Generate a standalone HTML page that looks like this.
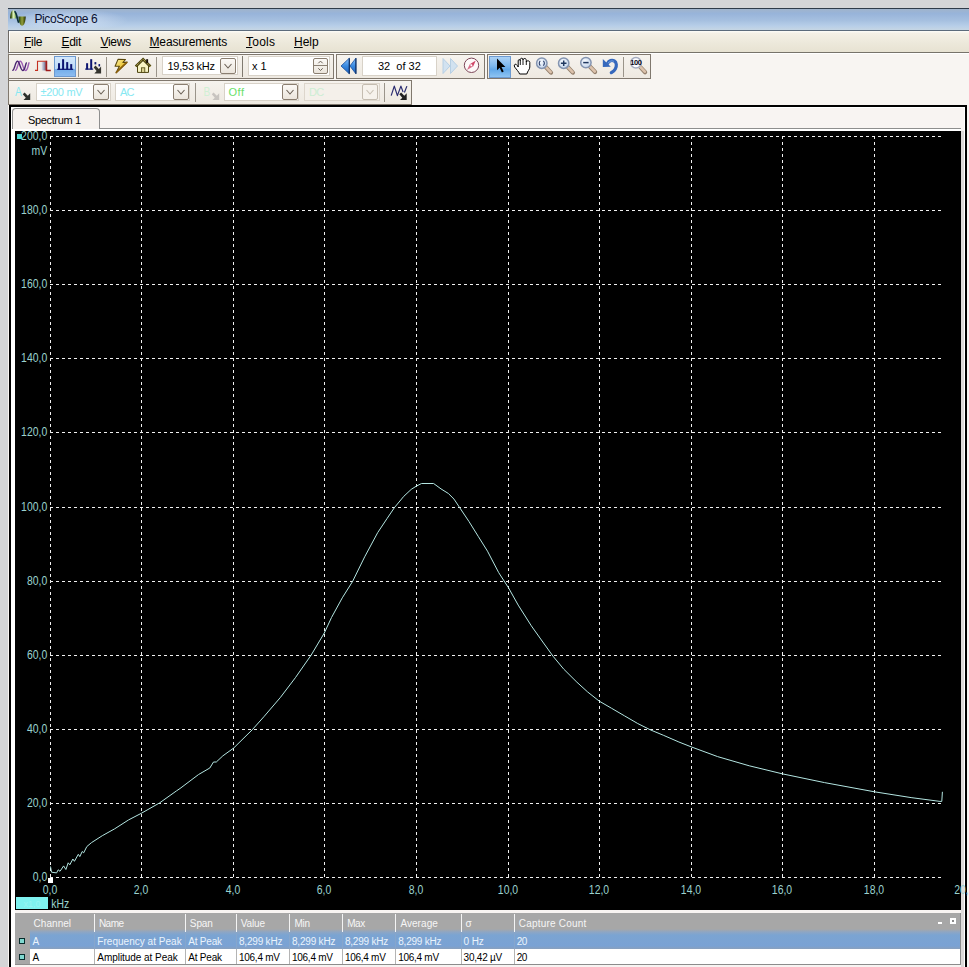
<!DOCTYPE html>
<html lang="en">
<head>
<meta charset="utf-8">
<title>PicoScope 6</title>
<style>
*{box-sizing:border-box;margin:0;padding:0}
html,body{width:969px;height:967px;overflow:hidden;background:#d4d5d7}
body{position:relative;font-family:"Liberation Sans",sans-serif;font-size:11px;color:#000}
.abs{position:absolute}
#title{left:8px;top:8px;width:961px;height:23px;border-top:1px solid #2e3b49;border-bottom:1px solid #5c6b7c;
 background:linear-gradient(#a0b4cc 0,#98b4da 22%,#a6c0e0 55%,#b7cee8 80%,#c6d6e4 100%)}
#title .glow{left:10px;top:0;width:120px;height:21px;background:radial-gradient(ellipse 58px 11px at 52px 11px,rgba(236,244,255,.6),rgba(236,244,255,0))}
#title .t{left:26.5px;top:3px;font-size:12px;line-height:14px;letter-spacing:-.42px;color:#0a1030;white-space:nowrap}
#menu{left:8px;top:31px;width:961px;height:22px;border-left:1px solid #6e6a66;border-bottom:1px solid #77736a;
 background:linear-gradient(#fdfcf8 0,#f4f0e6 12%,#ece8da 60%,#e7e2d2 100%)}
#menu:before{content:"";position:absolute;left:0;top:0;width:1px;height:21px;background:#fff}
#menu span{position:absolute;top:4px;font-size:12px;line-height:14px;letter-spacing:-.3px;white-space:nowrap}
#menu u{text-decoration:underline;text-underline-offset:1px;text-decoration-thickness:1px}
#tbarea{left:8px;top:53px;width:961px;height:52px;background:#f8f5f2;border-left:1px solid #6e6a66;border-top:1px solid #fff}
.grp{position:absolute;height:25px;background:linear-gradient(#f6f3ee,#eee9e1);border:1px solid #80786e}
.sep{position:absolute;width:1px;background:#9a948a}
.box{position:absolute;background:#fff;border:1px solid #d8d2c8;height:19px}
.box span{position:absolute;top:3px;font-size:11px;line-height:13px;white-space:nowrap;letter-spacing:-.3px}
.dd{position:absolute;width:16px;height:16px;border:1px solid #8a7e70;border-radius:2px;background:linear-gradient(#fbf9f6,#ebe5dc)}
.sel{position:absolute;border:1px solid #6d9ad0;background:linear-gradient(#d4e8fb 0,#bcd9f7 62%,#74aeea 66%,#8cbcf0 100%)}
svg{position:absolute;overflow:visible}
#frame{left:9px;top:105px;width:958px;height:870px;border:2px solid #000;background:#f8f4f2}
#frame:before{content:"";position:absolute;left:0;top:0;right:0;bottom:0;border:1px solid #fff}
#tab{left:12px;top:108px;width:88px;height:21px;border:1px solid #8e8e8e;border-bottom:none;border-radius:4px 4px 0 0;background:#f6f2ef}
#tab span{position:absolute;left:15px;top:5px;font-size:11px;line-height:13px;letter-spacing:-.36px;white-space:nowrap}
#tabline{left:11px;top:129px;width:950px;height:2px;background:#fff}
#tabline:before{content:"";position:absolute;left:88px;top:-1px;width:862px;height:1px;background:#8e8e8e}
svg.chart{left:15px;top:131px}
#tbl{left:15px;top:913px;width:946px;height:52px;background:#a7a7a7;border-right:1px solid #8c8c8c;border-bottom:1px solid #8c8c8c;overflow:hidden}
#tbl span{position:absolute;font-size:10px;line-height:12px;white-space:nowrap}
#tbl .h{top:5px;color:#f6f6f6}
#tbl .a{top:23px;color:#eaf3fc}
#tbl .b{top:38.5px;color:#000}
#tbl i{position:absolute;width:1px}
#tbl .vh{top:1px;height:18px;background:#f4f4f4}
#tbl .v1{top:19px;height:17px;background:#86a6cc}
#tbl .v2{top:36px;height:15px;background:#b4b4b4}
#tbl .r1{position:absolute;left:15px;top:16px;right:0;height:20px;background:linear-gradient(#a7a7a7 0,#8ea6c4 15%,#7ba4d2 30%,#7aa2d4 85%,#8aa0bc 100%)}
#tbl .r2{position:absolute;left:15px;top:36px;right:0;height:15px;background:#fff}
.cb{position:absolute;left:4px;width:6px;height:6px;border:1px solid #062c2c;background:#7fd8d0}
</style>
</head>
<body>
<div id="title" class="abs"><div class="glow abs"></div><div class="t abs">PicoScope 6</div></div>
<div id="menu" class="abs">
<span style="left:15px"><u>F</u>ile</span>
<span style="left:52.5px"><u>E</u>dit</span>
<span style="left:91.5px"><u>V</u>iews</span>
<span style="left:140.5px;letter-spacing:-.15px"><u>M</u>easurements</span>
<span style="left:237px;letter-spacing:.25px"><u>T</u>ools</span>
<span style="left:285px;letter-spacing:0"><u>H</u>elp</span>
</div>
<div class="abs" style="left:8px;top:100px;width:961px;height:867px;background:#f8f4f2"></div>
<div id="tbarea" class="abs"></div>
<!-- toolbar row 1 -->
<div class="grp" style="left:8px;top:54px;width:326px"></div>
<div class="grp" style="left:336px;top:54px;width:149px"></div>
<div class="grp" style="left:487px;top:54px;width:164px"></div>
<div class="grp" style="left:8px;top:80px;width:404px"></div>
<div class="sep" style="left:78px;top:57px;height:20px"></div>
<div class="sep" style="left:106px;top:57px;height:20px"></div>
<div class="sep" style="left:156px;top:57px;height:20px"></div>
<div class="sep" style="left:242px;top:56px;height:21px;background:#807a70"></div>
<div class="sep" style="left:623px;top:57px;height:20px"></div>
<div class="sep" style="left:195px;top:83px;height:19px"></div>
<div class="sep" style="left:384px;top:83px;height:19px"></div>
<div class="sel" style="left:54px;top:56px;width:22px;height:21px"></div>
<div class="sel" style="left:489px;top:56px;width:22px;height:22px;background:linear-gradient(#add2f5 0,#7db8ee 45%,#62a8e8 62%,#8ec4f2 100%)"></div>
<div class="box" style="left:162px;top:56px;width:76px"><span style="left:4.500px;top:2.800px;letter-spacing:-.25px">19,53 kHz</span></div>
<div class="dd" style="left:220px;top:58px"></div>
<div class="box" style="left:248px;top:56px;width:82px;height:20px"><span style="left:3px;top:2.5px;letter-spacing:0">x 1</span></div>
<div class="dd" style="left:313px;top:58px;width:15px;height:16px"></div>
<div class="box" style="left:362px;top:56px;width:75px;height:20px"><span style="left:15px;top:2.5px;letter-spacing:0">32&nbsp; of 32</span></div>
<div class="box" style="left:36px;top:83px;width:75px;height:18px"><span style="left:3.5px;top:1.5px;color:#86e8f2">±200 mV</span></div>
<div class="dd" style="left:93px;top:84px"></div>
<div class="box" style="left:115px;top:83px;width:75px;height:18px"><span style="left:4px;top:1.5px;color:#86e8f2;letter-spacing:-.8px">AC</span></div>
<div class="dd" style="left:173px;top:84px"></div>
<div class="box" style="left:224px;top:83px;width:75px;height:18px"><span style="left:3.5px;top:1.5px;color:#6adf6a;letter-spacing:.5px">Off</span></div>
<div class="dd" style="left:282px;top:84px"></div>
<div class="box" style="left:304px;top:83px;width:76px;height:18px;background:#f4f0ea;border-color:#ddd6cc"><span style="left:4px;top:1.5px;color:#cdeed4;letter-spacing:-.6px">DC</span></div>
<div class="dd" style="left:362px;top:84px;border-color:#c4bcb0;background:#f6f2ec"></div>
<svg width="969" height="110" viewBox="0 0 969 110" style="left:0;top:0">
<defs>
<linearGradient id="gB" x1="0" y1="0" x2="0" y2="1"><stop offset="0" stop-color="#8cc4ff"/><stop offset=".5" stop-color="#3a8ae0"/><stop offset="1" stop-color="#1a60c0"/></linearGradient>
<radialGradient id="gL" cx=".4" cy=".35" r=".7"><stop offset="0" stop-color="#f8fbff"/><stop offset="1" stop-color="#c0d2ea"/></radialGradient>
<linearGradient id="gS" x1="0" y1="0" x2="1" y2="0"><stop offset="0" stop-color="#fbf4f4"/><stop offset=".6" stop-color="#9098b4"/><stop offset="1" stop-color="#a03030"/></linearGradient>
<linearGradient id="gI1" x1="0" y1="0" x2="1" y2="0"><stop offset="0" stop-color="#1c2c08"/><stop offset=".22" stop-color="#4c6820"/><stop offset=".5" stop-color="#e0f4c0"/><stop offset=".8" stop-color="#a8cc78"/><stop offset="1" stop-color="#103830"/></linearGradient>
<linearGradient id="gI2" x1="0" y1="0" x2="1" y2="0"><stop offset="0" stop-color="#0c2c1c"/><stop offset=".2" stop-color="#4c6418"/><stop offset=".5" stop-color="#94a03c"/><stop offset=".8" stop-color="#505c14"/><stop offset="1" stop-color="#1c240c"/></linearGradient>
<linearGradient id="gZ" x1="0" y1="0" x2="1" y2="1"><stop offset="0" stop-color="#fdf4a8"/><stop offset=".5" stop-color="#ecc840"/><stop offset="1" stop-color="#a87410"/></linearGradient>
</defs>
<!-- chevrons -->
<g fill="none" stroke="#6a6056" stroke-width="1.1">
<path d="M224.500 64l3.500 4 3.500-4"/><path d="M97.500 90l3.500 4 3.500-4"/><path d="M177.500 90l3.500 4 3.500-4"/><path d="M286.500 90l3.500 4 3.500-4"/>
<path d="M366.500 90l3.500 4 3.500-4" stroke="#c8c0b4"/>
<path d="M318.300 63.300l2.200-2.200 2.200 2.200M318.300 68.300l2.200 2.200 2.200-2.200" stroke-width="1"/><path d="M314 65.500h13" stroke="#8a8074" stroke-width="1"/>
</g>
<!-- sine (two offset waves) -->
<path d="M15.500 70.300C17.500 69.500 18 61.300 20.300 61.300S23.200 70.500 25.500 70.500S27.800 66 29 62.800" fill="none" stroke="#9c5cb4" stroke-width="1.400" stroke-linecap="round"/>
<path d="M12.800 70.300C14.800 69.500 15.300 61.300 17.500 61.300S20.400 70.500 22.700 70.500S25 66 26.300 63" fill="none" stroke="#482470" stroke-width="1.400" stroke-linecap="round"/>
<!-- square wave -->
<path d="M41 61.500h5.500v9h-5.500z" fill="url(#gS)"/>
<path d="M35 70.400h2.500v-9.200h9" fill="none" stroke="#c43020" stroke-width="1.100"/>
<path d="M46.500 60.700v9.700h4.300" fill="none" stroke="#a01c1c" stroke-width="1.500"/>
<!-- spectrum bars -->
<g fill="#0c1470"><rect x="58" y="63.200" width="2" height="6.500"/><rect x="62.100" y="59.200" width="2" height="10.500"/><rect x="66.200" y="62.100" width="2" height="7.500"/><rect x="70.200" y="64.100" width="2" height="5.500"/><rect x="57.200" y="68.700" width="16" height="1.200"/></g>
<!-- persistence -->
<g fill="#0c1470"><rect x="86.100" y="63.200" width="2" height="6.300"/><rect x="90.200" y="59.200" width="2" height="10.300"/><rect x="94.500" y="62.100" width="1.800" height="2.300"/><rect x="98.500" y="64.100" width="1.600" height="2.300"/><rect x="85.200" y="68.500" width="8" height="1.200"/></g>
<path d="M93.700 67.400l1.800-1.800 3.300 3.300 2.300-2.300v6.800h-6.800l2.300-2.300z" fill="#34342e"/>
<!-- lightning -->
<path d="M118 59.400l7.500.1-2.600 3 4.300-.4-11.100 10.700 3.300-6.500-4.300-.1z" fill="url(#gZ)" stroke="#5a480c" stroke-width="1.100" stroke-linejoin="round"/>
<path d="M116.300 72.300l10.300-9.700" stroke="#8c600c" stroke-width="1.600" fill="none" stroke-linecap="round"/>
<!-- house -->
<path d="M137.500 66v6.400h11v-6.400l-5.500-5.500z" fill="#f8f4c4" stroke="#4c4410" stroke-width="1"/>
<path d="M135.600 66.400l7.500-7.200 7.500 7.200" fill="none" stroke="#4c4410" stroke-width="2.300"/>
<path d="M135.600 66.400l7.500-7.200 7.500 7.200" fill="none" stroke="#e8d870" stroke-width=".9" stroke-dasharray="1 1"/>
<rect x="141.500" y="67.800" width="3.300" height="4.600" fill="#d8d090" stroke="#4c4410" stroke-width=".8"/><rect x="146.200" y="59.200" width="1.900" height="4" fill="#181008"/>
<!-- double left -->
<path d="M341 66l8.300-7.800v15.600z M349.900 66l6-7.800v15.600z" fill="url(#gB)" stroke="#164c9c" stroke-width=".8" stroke-linejoin="round"/><path d="M349.300 58.200v15.600M355.900 58.200v15.600" stroke="#0c2c60" stroke-width="1.100"/>
<!-- double right disabled -->
<path d="M450 66l-7-7.500v15z M457.500 66l-7-7.500v15z" fill="#d2e2f0" stroke="#b2cce2" stroke-width=".9" stroke-linejoin="round"/>
<!-- compass -->
<circle cx="471.500" cy="65.300" r="7.200" fill="#fdf8f8" stroke="#7c4658" stroke-width="1"/>
<path d="M475.800 60.600l-2.800 6.200-2.900-2.700z" fill="#d04466"/><path d="M467 70l2.900-6.100 2.900 2.700z" fill="#d86c88"/><circle cx="471.400" cy="65.300" r="1" fill="#fff"/>
<!-- cursor arrow -->
<path d="M497 58.600v11.600l2.700-2.500 2.200 4.800 1.800-.9-2.200-4.600h3.900z" fill="#000"/>
<!-- hand -->
<path d="M519.600 74C518.800 71.800 516.500 69.500 514.800 67.200C513.600 65.500 514.600 63.600 516.200 64.400C517 64.900 517.600 66 518.200 67V60.800C518.200 59.200 520.300 59.200 520.300 60.800V59.600C520.300 57.800 523 57.800 523 59.600V60C523 58 526.300 58 526.300 60.200V62C526.300 60.400 529.800 60.400 529.800 62.400V67C529.800 69.500 527.500 71 526.800 74Z" fill="#fff" stroke="#000" stroke-width="1" stroke-linejoin="round"/>
<path d="M520.300 60.800V65M523 59.600V65M526.300 61.500V65" stroke="#000" stroke-width=".9" fill="none"/>
<!-- magnifiers -->
<g>
<path d="M546 67.300l5 5.300" stroke="#94806c" stroke-width="4.200" stroke-linecap="round"/>
<path d="M545.800 66.900l4.900 5.200" stroke="#dcc2ac" stroke-width="2.600" stroke-linecap="round"/>
<circle cx="541.800" cy="63.200" r="5.200" fill="url(#gL)" stroke="#8494b0" stroke-width="1.500"/>
</g>
<g transform="translate(21.9 0)">
<path d="M546 67.300l5 5.300" stroke="#94806c" stroke-width="4.200" stroke-linecap="round"/>
<path d="M545.800 66.900l4.900 5.200" stroke="#dcc2ac" stroke-width="2.600" stroke-linecap="round"/>
<circle cx="541.800" cy="63.200" r="5.200" fill="url(#gL)" stroke="#8494b0" stroke-width="1.500"/>
</g><g transform="translate(44.1 -.6)">
<path d="M546 67.300l5 5.300" stroke="#94806c" stroke-width="4.200" stroke-linecap="round"/>
<path d="M545.800 66.900l4.900 5.200" stroke="#dcc2ac" stroke-width="2.600" stroke-linecap="round"/>
<circle cx="541.800" cy="63.200" r="5.200" fill="url(#gL)" stroke="#8494b0" stroke-width="1.500"/>
</g><g transform="translate(94.1 -.4)">
<path d="M546 67.300l5 5.300" stroke="#94806c" stroke-width="4.200" stroke-linecap="round"/>
<path d="M545.800 66.900l4.900 5.200" stroke="#dcc2ac" stroke-width="2.600" stroke-linecap="round"/>
<circle cx="541.800" cy="63.200" r="5.200" fill="#fcfcff" stroke="#a4acc0" stroke-width="1.500"/>
</g>
<path d="M540.300 60.800c-1.400 1.200-1.400 3.600 0 4.800M543.300 60.800c1.400 1.200 1.400 3.600 0 4.800" fill="none" stroke="#283c68" stroke-width="1.100"/>
<path d="M560.900 63.200h5.600M563.700 60.400v5.600" stroke="#203860" stroke-width="1.500"/>
<path d="M583.200 62.600h5.400" stroke="#203860" stroke-width="1.500"/>
<text x="635.900" y="65.200" font-family="'Liberation Sans',sans-serif" font-size="7.500" font-weight="bold" text-anchor="middle" fill="#080818" letter-spacing="-.4">100</text>
<!-- undo -->
<path d="M607.500 63.500C609 60.500 612 59.700 614.300 61S617 66 615.300 69S612.300 72 611.300 72.600" stroke="#3668bc" stroke-width="3.200" fill="none" stroke-linecap="round"/><path d="M608 63.300C609.500 61 612 60.300 613.800 61.300" stroke="#78a4e4" stroke-width="1" fill="none"/><path d="M602.800 67v-8l8 7.800z" fill="#3668bc"/>
<!-- A icon -->
<text x="15" y="95.700" font-family="'Liberation Sans',sans-serif" font-size="12.500" fill="#86e8f2" textLength="6.800" lengthAdjust="spacingAndGlyphs">A</text>
<path d="M22.800 94.300l1.800-1.800 3.200 3.200 2.400-2.400v6.700h-6.700l2.300-2.300z" fill="#2c302c"/>
<!-- B icon disabled -->
<text x="203.500" y="95.500" font-family="'Liberation Sans',sans-serif" font-size="12.500" fill="#d0f0d4" textLength="6.800" lengthAdjust="spacingAndGlyphs">B</text>
<path d="M211.800 94.300l1.800-1.800 3.200 3.200 2.400-2.400v6.700h-6.700l2.300-2.300z" fill="#c8c4c0"/>
<!-- AW icon -->
<path d="M391.200 95.600L394.300 86.100L397.400 95.600L400.900 86.100L403.100 92M404.400 92.500L406.900 86.100" fill="none" stroke="#2a2c70" stroke-width="1.200" stroke-linejoin="round"/>
<path d="M399.300 94.300l1.800-1.800 3.200 3.200 2.400-2.400v6.700h-6.700l2.300-2.300z" fill="#202020"/>
<!-- app icon -->
<path d="M10 18.500c.2-4 1.200-8.200 3.200-8.200s3 4 3.300 8.200z" fill="url(#gI1)"/>
<path d="M15 10.800c2.500 1.500 3 8 4.500 11.500l-1.500 1c-1.500-3.500-2-9.500-4-11.500z" fill="#0c3038"/>
<path d="M18.400 16.500c.3 5 1.600 9.300 3.700 9.300s3.400-4.300 3.700-9.300z" fill="url(#gI2)"/>
</svg>

<div id="frame" class="abs"></div>
<div id="tabline" class="abs"></div>
<div class="abs" style="left:961px;top:131px;width:3px;height:836px;background:#dddad9"></div>
<div class="abs" style="left:11px;top:131px;width:4px;height:836px;background:#fff"></div>
<div id="tab" class="abs"><span>Spectrum 1</span></div>
<svg class="chart" width="946" height="779" viewBox="15 131 946 779">
<rect x="15" y="131" width="946" height="779" fill="#000"/>
<g stroke="#f0f0f0" stroke-width="1" stroke-dasharray="3 3" shape-rendering="crispEdges" fill="none">
<path d="M50.5 136V878"/>
<path d="M141.5 136V878"/>
<path d="M233.5 136V878"/>
<path d="M324.5 136V878"/>
<path d="M416.5 136V878"/>
<path d="M508.5 136V878"/>
<path d="M599.5 136V878"/>
<path d="M691.5 136V878"/>
<path d="M782.5 136V878"/>
<path d="M874.5 136V878"/>
<path d="M50 136.5H942"/>
<path d="M50 210.5H942"/>
<path d="M50 284.5H942"/>
<path d="M50 358.5H942"/>
<path d="M50 432.5H942"/>
<path d="M50 507.5H942"/>
<path d="M50 581.5H942"/>
<path d="M50 655.5H942"/>
<path d="M50 729.5H942"/>
<path d="M50 803.5H942"/>
<path d="M50 877.5H942"/>
</g>
<path d="M50.5 866.5 L51.5 872.2 L56.6 872.9 L58.2 869.8 L60.0 871.3 L63.6 865.9 L65.9 869.5 L68.2 862.8 L69.8 864.8 L72.9 859.0 L74.4 861.3 L78.3 854.3 L79.8 856.6 L82.2 851.5 L83.7 852.8 L86.8 846.6 L91.4 842.7 L102.3 835.7 L114.7 828.8 L128.6 819.9 L141.3 813.3 L159.6 802.9 L176.6 790.8 L180.0 788.5 L198.6 774.5 L209.8 768.0 L213.5 762.0 L216.3 762.0 L222.8 755.9 L233.6 748.1 L252.2 729.8 L263.8 716.8 L280.5 697.3 L295.4 677.7 L311.2 655.0 L324.3 633.0 L331.5 617.5 L342.3 597.8 L352.6 581.4 L364.7 556.8 L377.7 532.6 L387.0 518.6 L394.5 507.5 L403.8 496.3 L411.2 489.4 L416.4 486.1 L421.5 483.5 L433.6 483.5 L441.0 488.9 L448.4 493.5 L454.0 499.1 L459.6 507.5 L468.9 521.4 L478.2 536.3 L487.5 551.2 L498.7 572.6 L508.5 587.8 L518.2 605.1 L531.3 625.8 L542.1 641.0 L553.0 656.2 L563.8 669.2 L576.9 682.2 L587.7 692.0 L599.2 701.1 L611.6 708.3 L624.6 715.9 L637.7 723.5 L650.7 730.0 L663.7 735.4 L678.9 742.0 L691.6 747.0 L717.6 756.6 L749.3 765.8 L782.6 773.9 L824.5 782.6 L874.5 791.8 L911.1 797.6 L940.0 801.4 L941.8 801.4 L942.4 791.8" fill="none" stroke="#b4e6e2" stroke-width="1" stroke-linejoin="round"/>
<g font-family="'Liberation Sans', sans-serif" font-size="12" fill="#9ad2ce">
<text transform="translate(47.2 139.8) scale(0.87 1)" text-anchor="end">200,0</text>
<text transform="translate(47.2 213.9) scale(0.87 1)" text-anchor="end">180,0</text>
<text transform="translate(47.2 287.9) scale(0.87 1)" text-anchor="end">160,0</text>
<text transform="translate(47.2 361.9) scale(0.87 1)" text-anchor="end">140,0</text>
<text transform="translate(47.2 435.9) scale(0.87 1)" text-anchor="end">120,0</text>
<text transform="translate(47.2 510.9) scale(0.87 1)" text-anchor="end">100,0</text>
<text transform="translate(47.2 584.9) scale(0.87 1)" text-anchor="end">80,0</text>
<text transform="translate(47.2 658.9) scale(0.87 1)" text-anchor="end">60,0</text>
<text transform="translate(47.2 732.9) scale(0.87 1)" text-anchor="end">40,0</text>
<text transform="translate(47.2 806.9) scale(0.87 1)" text-anchor="end">20,0</text>
<text transform="translate(47.2 880.9) scale(0.87 1)" text-anchor="end">0,0</text>
<text transform="translate(47.2 155.3) scale(0.87 1)" text-anchor="end">mV</text>
<text transform="translate(50 893.9) scale(0.87 1)" text-anchor="middle">0,0</text>
<text transform="translate(141 893.9) scale(0.87 1)" text-anchor="middle">2,0</text>
<text transform="translate(233 893.9) scale(0.87 1)" text-anchor="middle">4,0</text>
<text transform="translate(324 893.9) scale(0.87 1)" text-anchor="middle">6,0</text>
<text transform="translate(416 893.9) scale(0.87 1)" text-anchor="middle">8,0</text>
<text transform="translate(508 893.9) scale(0.87 1)" text-anchor="middle">10,0</text>
<text transform="translate(599 893.9) scale(0.87 1)" text-anchor="middle">12,0</text>
<text transform="translate(691 893.9) scale(0.87 1)" text-anchor="middle">14,0</text>
<text transform="translate(782 893.9) scale(0.87 1)" text-anchor="middle">16,0</text>
<text transform="translate(874 893.9) scale(0.87 1)" text-anchor="middle">18,0</text>
<text transform="translate(964.3 893.9) scale(0.87 1)" text-anchor="middle">20,0</text>
<text transform="translate(51.3 908) scale(0.87 1)" text-anchor="start">kHz</text>
</g>
<rect x="17" y="134" width="5" height="5" fill="#4ad6d4"/>
<rect x="48" y="878" width="5" height="5" fill="#fff"/>
<rect x="16" y="897" width="32" height="12" fill="#7ff2f0"/>
<text x="32" y="907" text-anchor="middle" font-family="'Liberation Sans', sans-serif" font-size="9" fill="#98f5f3">x1,0</text>
</svg>
<div id="tbl" class="abs">
<div class="r1"></div><div class="r2"></div>
<i class="vh" style="left:79px"></i><i class="v1" style="left:79px"></i><i class="v2" style="left:79px"></i>
<i class="vh" style="left:170px"></i><i class="v1" style="left:170px"></i><i class="v2" style="left:170px"></i>
<i class="vh" style="left:221px"></i><i class="v1" style="left:221px"></i><i class="v2" style="left:221px"></i>
<i class="vh" style="left:274px"></i><i class="v1" style="left:274px"></i><i class="v2" style="left:274px"></i>
<i class="vh" style="left:327px"></i><i class="v1" style="left:327px"></i><i class="v2" style="left:327px"></i>
<i class="vh" style="left:380px"></i><i class="v1" style="left:380px"></i><i class="v2" style="left:380px"></i>
<i class="vh" style="left:446px"></i><i class="v1" style="left:446px"></i><i class="v2" style="left:446px"></i>
<i class="vh" style="left:499px"></i><i class="v1" style="left:499px"></i><i class="v2" style="left:499px"></i>
<span class="h" style="left:18.6px;letter-spacing:0.04px">Channel</span>
<span class="h" style="left:83.9px;letter-spacing:-0.49px">Name</span>
<span class="h" style="left:174.8px;letter-spacing:-0.08px">Span</span>
<span class="h" style="left:225.7px;letter-spacing:-0.11px">Value</span>
<span class="h" style="left:279.5px;letter-spacing:-0.26px">Min</span>
<span class="h" style="left:332.2px;letter-spacing:-0.40px">Max</span>
<span class="h" style="left:385.4px;letter-spacing:0.06px">Average</span>
<span class="h" style="left:450.6px;letter-spacing:0.13px">σ</span>
<span class="h" style="left:503.8px;letter-spacing:0.21px">Capture Count</span>
<span class="a" style="left:17.4px;letter-spacing:0.50px">A</span>
<span class="a" style="left:82.3px;letter-spacing:0.03px">Frequency at Peak</span>
<span class="a" style="left:173.3px;letter-spacing:-0.22px">At Peak</span>
<span class="a" style="left:224.0px;letter-spacing:-0.20px">8,299 kHz</span>
<span class="a" style="left:277.0px;letter-spacing:-0.20px">8,299 kHz</span>
<span class="a" style="left:329.9px;letter-spacing:-0.20px">8,299 kHz</span>
<span class="a" style="left:383.2px;letter-spacing:-0.20px">8,299 kHz</span>
<span class="a" style="left:448.6px;letter-spacing:-0.15px">0 Hz</span>
<span class="a" style="left:501.8px;letter-spacing:-0.60px">20</span>
<span class="b" style="left:17.4px;letter-spacing:0.50px">A</span>
<span class="b" style="left:82.3px;letter-spacing:-0.05px">Amplitude at Peak</span>
<span class="b" style="left:173.3px;letter-spacing:-0.22px">At Peak</span>
<span class="b" style="left:224.0px;letter-spacing:-0.27px">106,4 mV</span>
<span class="b" style="left:277.0px;letter-spacing:-0.27px">106,4 mV</span>
<span class="b" style="left:329.9px;letter-spacing:-0.27px">106,4 mV</span>
<span class="b" style="left:383.2px;letter-spacing:-0.27px">106,4 mV</span>
<span class="b" style="left:448.6px;letter-spacing:-0.22px">30,42 µV</span>
<span class="b" style="left:501.8px;letter-spacing:-0.60px">20</span>
<div class="abs" style="left:923px;top:9px;width:4px;height:2px;background:#fff"></div>
<div class="abs" style="left:935px;top:5px;width:6px;height:6px;border:2px solid #fff;background:#8a8a8a"></div>
<div class="cb" style="top:25px"></div><div class="cb" style="top:41px"></div>
</div>
</body>
</html>
